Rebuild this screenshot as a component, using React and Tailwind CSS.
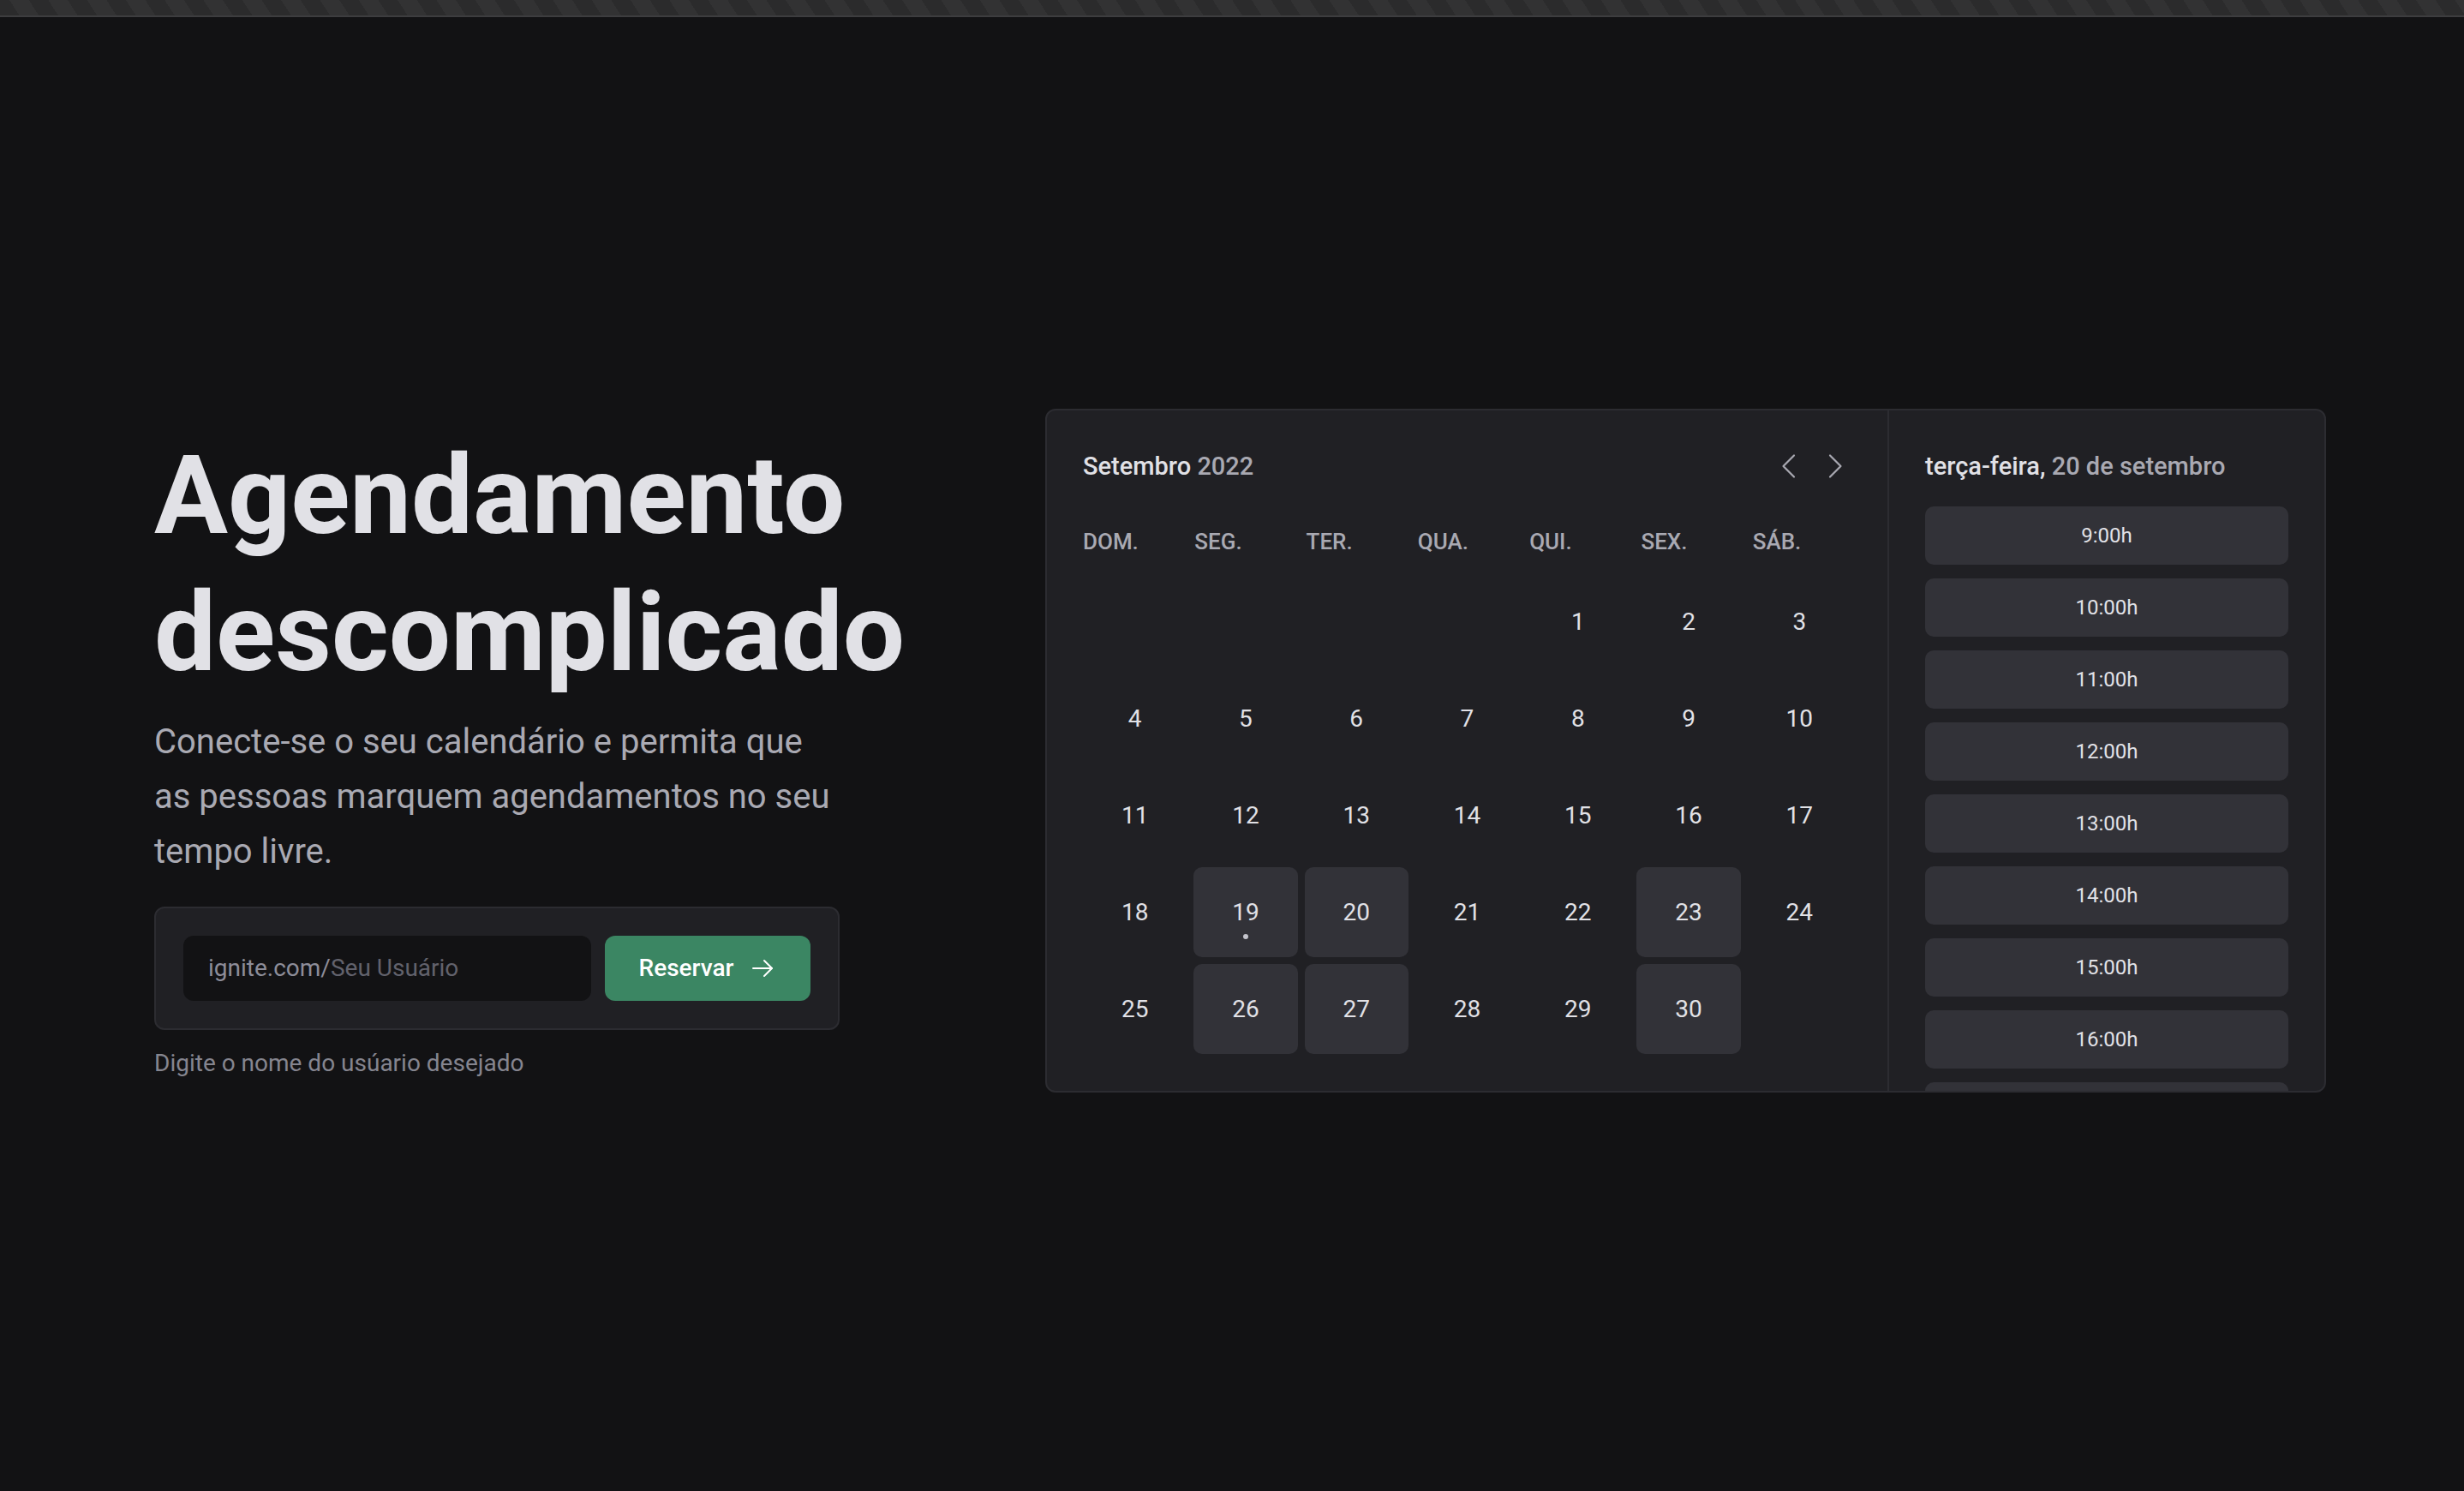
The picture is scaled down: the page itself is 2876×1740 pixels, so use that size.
import React from 'react';

const weekDays = ['DOM.', 'SEG.', 'TER.', 'QUA.', 'QUI.', 'SEX.', 'SÁB.'];

// 4 leading blanks (Sep 2022 starts on a Thursday)
const days = [null, null, null, null, ...Array.from({ length: 30 }, (_, i) => i + 1)];
const available = [19, 20, 23, 26, 27, 30];

const hours = ['9:00h', '10:00h', '11:00h', '12:00h', '13:00h', '14:00h', '15:00h', '16:00h', '17:00h'];

const Caret = ({ dir }) => (
    <svg width="40" height="40" viewBox="0 0 256 256" fill="none" stroke="#A9A9B2" strokeWidth="14" strokeLinecap="round" strokeLinejoin="round">
        {dir === 'left' ? <polyline points="160,208 80,128 160,48" /> : <polyline points="96,48 176,128 96,208" />}
    </svg>
);

const ArrowRight = () => (
    <svg width="32" height="32" viewBox="0 0 256 256" fill="none" stroke="#ffffff" strokeWidth="16" strokeLinecap="round" strokeLinejoin="round">
        <line x1="40" y1="128" x2="216" y2="128" />
        <polyline points="144,56 216,128 144,200" />
    </svg>
);

export default function App() {
    return (
        <div className="min-h-screen bg-[#121214] font-['Roboto',sans-serif] text-[#E1E1E6]">
            {/* window strip */}
            <div className="h-[20px] border-b-2 border-[#3d3d3f] bg-[repeating-linear-gradient(57deg,#2b2b2c_0px,#2b2b2c_19px,#323233_19px,#323233_38px)]" />

            <div className="flex h-[1720px] items-center gap-[240px] pl-[180px]">
                {/* Hero */}
                <div className="w-[800px] shrink-0">
                    <h1 className="text-[128px] leading-[160px] font-bold text-[#E1E1E6]">Agendamento descomplicado</h1>
                    <p className="mt-[16px] text-[40px] leading-[64px] text-[#A9A9B2]">
                        Conecte-se o seu calendário e permita que as pessoas marquem agendamentos no seu tempo livre.
                    </p>

                    <div className="mt-[32px] flex gap-[16px] rounded-[12px] border-2 border-[#2c2c31] bg-[#202024] p-[32px]">
                        <div className="flex h-[76px] flex-1 items-center rounded-[12px] bg-[#121214] pl-[29px] text-[28px]">
                            <span className="text-[#8D8D99]">ignite.com/</span>
                            <input
                                placeholder="Seu Usuário"
                                className="w-full bg-transparent text-[#E1E1E6] outline-none placeholder:text-[#62626c]"
                            />
                        </div>
                        <button className="flex h-[76px] w-[240px] items-center justify-center gap-[18px] rounded-[12px] bg-[#3b8663] text-[28px] font-medium text-white">
                            Reservar <ArrowRight />
                        </button>
                    </div>

                    <p className="mt-[16px] text-[28px] leading-[45px] text-[#85858f]">Digite o nome do usúario desejado</p>
                </div>

                {/* Calendar preview */}
                <div className="mb-[8px] flex h-[798px] w-[1495px] shrink-0 overflow-hidden rounded-[12px] border-2 border-[#2c2c31] bg-[#202024]">
                    <div className="w-[981px] shrink-0 px-[42px] pt-[45px]">
                        <div className="flex h-[40px] items-center justify-between">
                            <p className="text-[29px] leading-[40px] font-medium text-[#E1E1E6]">
                                Setembro <span className="text-[#A9A9B2]">2022</span>
                            </p>
                            <div className="flex gap-[12px]">
                                <button className="flex h-[40px] w-[40px] items-center justify-center"><Caret dir="left" /></button>
                                <button className="flex h-[40px] w-[40px] items-center justify-center"><Caret dir="right" /></button>
                            </div>
                        </div>

                        <div className="mt-[49px] grid w-[904px] grid-cols-7 gap-[8px]">
                            {weekDays.map(d => (
                                <span key={d} className="text-[26px] leading-[38px] font-medium text-[#A9A9B2]">{d}</span>
                            ))}
                        </div>

                        <div className="mt-[22px] grid grid-cols-7 gap-[8px]">
                            {days.map((d, i) => (
                                <div
                                    key={i}
                                    className={`relative flex h-[105px] items-center justify-center rounded-[10px] text-[28px] text-[#E1E1E6] ${
                                        available.includes(d) ? 'bg-[#323238]' : ''
                                    }`}
                                >
                                    {d}
                                    {d === 19 && <span className="absolute left-1/2 top-[78px] h-[6px] w-[6px] -translate-x-1/2 rounded-full bg-[#C4C4CC]" />}
                                </div>
                            ))}
                        </div>
                    </div>

                    <div className="flex flex-1 flex-col overflow-hidden border-l-2 border-[#2c2c31] px-[42px] pt-[45px]">
                        <p className="text-[29px] leading-[40px] font-medium text-[#E1E1E6]">
                            terça-feira, <span className="text-[#A9A9B2]">20 de setembro</span>
                        </p>
                        <div className="mt-[27px] flex flex-col gap-[16px]">
                            {hours.map(h => (
                                <button key={h} className="h-[68px] shrink-0 rounded-[10px] bg-[#323238] text-[24px] text-[#E1E1E6]">{h}</button>
                            ))}
                        </div>
                    </div>
                </div>
            </div>
        </div>
    );
}
